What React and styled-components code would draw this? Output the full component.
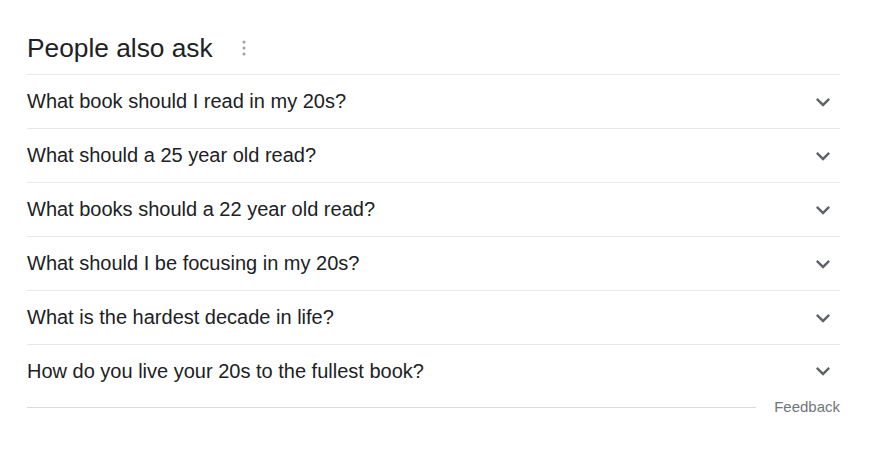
import React from "react";
import styled, { createGlobalStyle } from "styled-components";

const questions = [
  "What book should I read in my 20s?",
  "What should a 25 year old read?",
  "What books should a 22 year old read?",
  "What should I be focusing in my 20s?",
  "What is the hardest decade in life?",
  "How do you live your 20s to the fullest book?",
];

const GlobalStyle = createGlobalStyle`
  body {
    margin: 0;
    background: #fff;
    font-family: "Liberation Sans", Arial, Helvetica, sans-serif;
    color: #202124;
  }
`;

const Wrapper = styled.div`
  width: 813px;
  padding-left: 27px;
`;

const Header = styled.div`
  display: flex;
  align-items: center;
  padding: 32px 0 10px;
  border-bottom: 1px solid #e8e8e8;
`;

const Title = styled.h2`
  margin: 0;
  font-size: 26.3px;
  font-weight: 400;
  line-height: 32px;
  color: #202124;
`;

const MenuDots = styled.svg`
  margin-left: 29px;
  display: block;
`;

const Row = styled.div`
  display: flex;
  align-items: center;
  justify-content: space-between;
  height: ${(p) => (p.last ? "52px" : "53px")};
  border-bottom: 1px solid ${(p) => (p.last ? "transparent" : "#e8e8e8")};
  cursor: pointer;
`;

const Question = styled.span`
  font-size: 20px;
  line-height: 23px;
  color: #202124;
`;

const Chevron = styled.svg`
  display: block;
  margin-right: 3px;
  fill: #5f6368;
`;

const Footer = styled.div`
  display: flex;
  align-items: center;
  gap: 18px;
  height: 18px;
`;

const Rule = styled.div`
  flex: 1;
  height: 1px;
  background: #dadada;
`;

const Feedback = styled.span`
  font-size: 15px;
  line-height: 18px;
  color: #70757a;
`;

export default function App() {
  return (
    <>
      <GlobalStyle />
      <Wrapper>
        <Header>
          <Title>People also ask</Title>
          <MenuDots width="4" height="16" viewBox="0 0 4 16">
            <circle cx="2" cy="2" r="1.5" fill="#9aa0a6" />
            <circle cx="2" cy="8" r="1.5" fill="#9aa0a6" />
            <circle cx="2" cy="14" r="1.5" fill="#9aa0a6" />
          </MenuDots>
        </Header>
        {questions.map((q, i) => (
          <Row key={q} last={i === questions.length - 1}>
            <Question>{q}</Question>
            <Chevron width="28" height="28" viewBox="0 0 24 24">
              <path d="M16.59 8.59L12 13.17 7.41 8.59 6 10l6 6 6-6z" />
            </Chevron>
          </Row>
        ))}
        <Footer>
          <Rule />
          <Feedback>Feedback</Feedback>
        </Footer>
      </Wrapper>
    </>
  );
}
